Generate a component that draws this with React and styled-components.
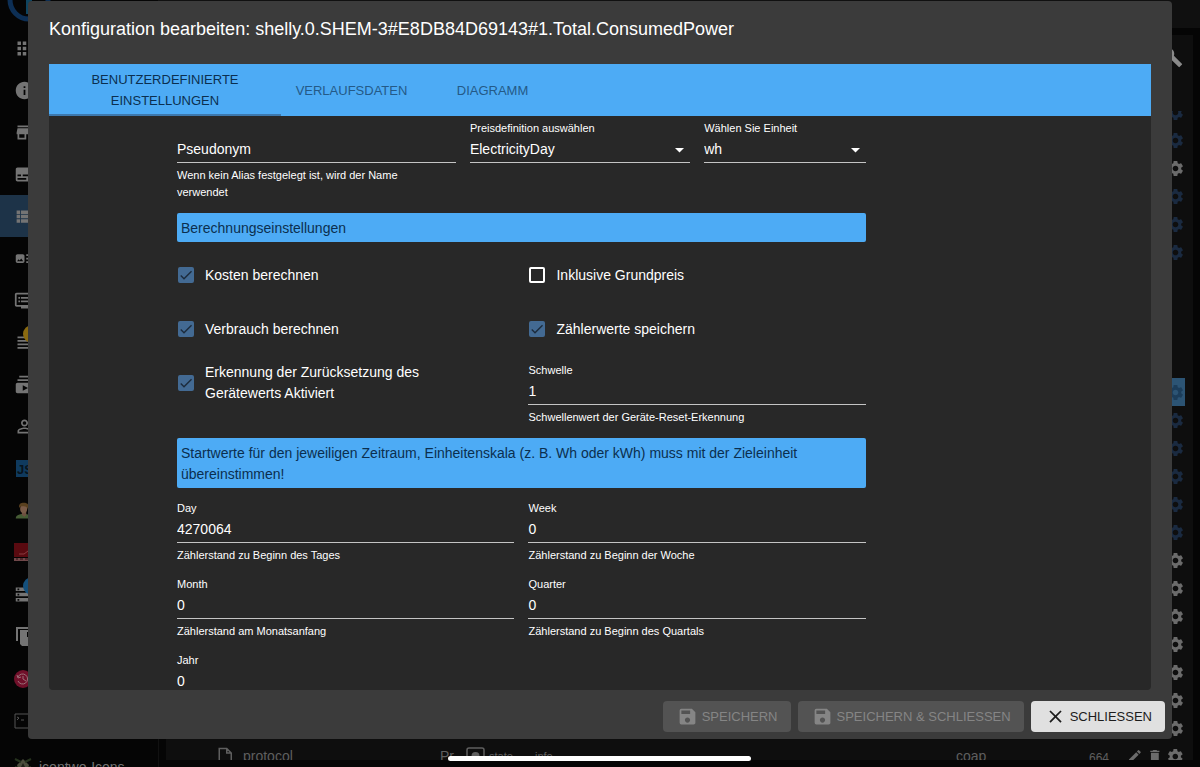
import React, { useState } from 'react';
import styled, { createGlobalStyle, css, ThemeProvider } from 'styled-components';
import {
  MdApps,
  MdInfo,
  MdStore,
  MdSubtitles,
  MdViewList,
  MdArtTrack,
  MdDvr,
  MdViewHeadline,
  MdSubscriptions,
  MdPersonOutline,
  MdStorage,
  MdSettings,
  MdBuild,
  MdEdit,
  MdDelete,
  MdSave,
  MdClose,
  MdCheck,
} from 'react-icons/md';

const theme = {
  colors: {
    page: '#050505',
    appBar: '#101010',
    panel: '#0e0e0e',
    dialog: '#3b3b3b',
    content: '#282828',
    primary: '#4dabf5',
    primaryText: '#0b2f4f',
    secondary: '#436a93',
    text: '#ffffff',
    line: '#c4c4c4',
    dimmed: '#5f5f5f',
    dimmedBlue: '#1a2a40',
    selected: '#2c5474',
  },
};

const GlobalStyle = createGlobalStyle`
  *, *::before, *::after {
    box-sizing: border-box;
  }

  body {
    margin: 0;
    background: #050505;
    color: #fff;
    font-family: "Liberation Sans", Arial, Helvetica, sans-serif;
    font-size: 14px;
    overflow: hidden;
  }

  button, input, select {
    font: inherit;
  }
`;

/* ---------- admin page behind the dialog ---------- */

const Page = styled.div`
  display: flex;
  height: 100vh;
  overflow: hidden;
  background: ${props => props.theme.colors.page};
`;

const Sidebar = styled.nav`
  width: 159px;
  flex-shrink: 0;
  border-right: 1px solid #111;
`;

const LogoBar = styled.div`
  height: 27px;
  padding-left: 7px;
  display: flex;
  align-items: flex-end;

  svg {
    flex-shrink: 0;
    margin-bottom: 5px;
  }
`;

const MenuLink = styled.a`
  display: flex;
  align-items: center;
  gap: 4px;
  height: 42px;
  padding-left: 14px;
  color: #747474;
  font-size: 14px;
  text-decoration: none;
  white-space: nowrap;
  background: ${props => (props.$active ? '#1d3348' : 'transparent')};

  &:last-child {
    margin-top: 5px;
  }

  svg {
    flex-shrink: 0;
  }
`;

const IconSlot = styled.span`
  position: relative;
  display: flex;
  width: 21px;
`;

const Badge = styled.span`
  position: absolute;
  top: -7px;
  left: 9px;
  width: 18px;
  height: 18px;
  border-radius: 50%;
  background: ${props => props.$color};
`;

const ScriptLogo = styled.span`
  width: 17px;
  height: 17px;
  margin-left: 2px;
  background: #0f3a5e;
  color: #08131c;
  font-size: 13px;
  font-weight: bold;
  line-height: 19px;
  text-align: right;
`;

const Main = styled.main`
  flex: 1;
  min-width: 0;
  display: flex;
  flex-direction: column;
`;

const AppBar = styled.header`
  height: 28px;
  flex-shrink: 0;
  background: ${props => props.theme.colors.appBar};
`;

const ObjectsPanel = styled.section`
  flex: 1;
  min-height: 0;
  display: flex;
  flex-direction: column;
  margin: 7px;
  padding-right: 8px;
  background: ${props => props.theme.colors.panel};
`;

const Toolbar = styled.div`
  display: flex;
  justify-content: flex-end;
  align-items: center;
  height: 44px;
  margin-bottom: 32px;
  padding-right: 2px;
  color: #8a8a8a;
`;

const ObjectList = styled.div`
  flex: 1;
  min-height: 0;
  overflow: hidden;

  > :first-child {
    margin-top: -13px;
  }
`;

const ObjectRow = styled.div`
  display: grid;
  grid-template-columns: 26px 197px 26px 69px 1fr 133px 38px 58px;
  align-items: center;
  height: 28px;
  padding-left: 51px;
  color: ${props => props.theme.colors.dimmed};
  background: ${props => (props.$selected ? props.theme.colors.selected : 'transparent')};
`;

const SmallCell = styled.span`
  display: flex;
  align-items: center;
  gap: 4px;
  font-size: 11px;
`;

const CountCell = styled.span`
  padding-top: 4px;
  font-size: 12px;
`;

const RowActions = styled.span`
  grid-column: 8;
  display: flex;
  justify-content: flex-end;
  align-items: center;
  gap: 4px;
  color: ${props => props.$color};
`;

/* ---------- dialog ---------- */

const Overlay = styled.div`
  position: fixed;
  inset: 0;
  display: flex;
  padding: 1px 28px 28px;
`;

const DialogBox = styled.div`
  flex: 1;
  min-width: 0;
  display: flex;
  flex-direction: column;
  border-radius: 4px;
  background: ${props => props.theme.colors.dialog};
`;

const DialogTitle = styled.h1`
  margin: 0;
  padding: 14px 21px 21px;
  font-size: 18px;
  font-weight: normal;
  line-height: 28px;
`;

const DialogBody = styled.div`
  flex: 1;
  min-height: 0;
  display: flex;
  flex-direction: column;
  margin: 0 21px;
  border-radius: 0 0 4px 4px;
  background: ${props => props.theme.colors.content};
  overflow: hidden;
`;

const Tabs = styled.div`
  display: flex;
  flex-shrink: 0;
  background: ${props => props.theme.colors.primary};
`;

const Tab = styled.button`
  min-width: 141px;
  max-width: 232px;
  padding: 5px 14px 3px;
  border: 0;
  border-bottom: 2px solid ${props => (props.$active ? '#3d78ad' : 'transparent')};
  background: none;
  color: ${props => (props.$active ? props.theme.colors.primaryText : '#245a87')};
  font-size: 13px;
  line-height: 21px;
  text-transform: uppercase;
  cursor: pointer;
`;

const Scroller = styled.div`
  flex: 1;
  min-height: 0;
  overflow-y: auto;
  scrollbar-width: none;
`;

const Form = styled.form`
  display: grid;
  grid-template-columns: repeat(12, 1fr);
  gap: 12px 14px;
  align-items: start;
  max-width: 689px;
  margin-left: 128px;
  padding: 4px 0 16px;
`;

const FieldBox = styled.div`
  grid-column: span ${props => props.$span};
  display: flex;
  flex-direction: column;
`;

const Label = styled.label`
  height: 16px;
  font-size: 11px;
  line-height: 16px;
`;

const controlStyle = css`
  width: 100%;
  height: 27px;
  padding: 0;
  border: 0;
  border-bottom: 1px solid ${props => props.theme.colors.line};
  border-radius: 0;
  background: transparent;
  color: ${props => props.theme.colors.text};
  font-size: 14px;
  outline: none;
  appearance: none;
`;

const Input = styled.input`
  ${controlStyle}

  &::placeholder {
    color: ${props => props.theme.colors.text};
    opacity: 1;
  }
`;

const Select = styled.select`
  ${controlStyle}

  option {
    background: ${props => props.theme.colors.content};
  }
`;

const SelectWrap = styled.div`
  position: relative;
  display: flex;

  svg {
    position: absolute;
    top: 12px;
    right: 6px;
    pointer-events: none;
  }
`;

const HelperText = styled.div`
  margin-top: 4px;
  padding-right: 42px;
  font-size: 11px;
  line-height: 17px;
`;

const Banner = styled.h2`
  grid-column: 1 / -1;
  margin: 0;
  padding: 5px 4px 3px;
  border-radius: 2px;
  background: ${props => props.theme.colors.primary};
  color: ${props => props.theme.colors.primaryText};
  font-size: 14px;
  font-weight: normal;
  line-height: 21px;
`;

const CheckLabel = styled.label`
  grid-column: span 6;
  display: flex;
  align-items: center;
  gap: 11px;
  min-height: 42px;
  padding: 0 70px 0 1px;
  line-height: 21px;
  cursor: pointer;
`;

const CheckWrap = styled.span`
  position: relative;
  display: flex;

  svg {
    position: absolute;
    inset: 0;
    color: #1c2b3b;
    pointer-events: none;
  }
`;

const CheckInput = styled.input`
  width: 16px;
  height: 16px;
  margin: 0;
  border: 2px solid #fff;
  border-radius: 2px;
  appearance: none;

  &:checked {
    border-color: ${props => props.theme.colors.secondary};
    background: ${props => props.theme.colors.secondary};
  }
`;

const Actions = styled.div`
  display: flex;
  justify-content: flex-end;
  gap: 7px;
  padding: 11px 7px 7px;
`;

const Button = styled.button`
  display: flex;
  align-items: center;
  gap: 4px;
  height: 31px;
  padding: 0 13px 0 14px;
  border: 0;
  border-radius: 4px;
  background: #e0e0e0;
  color: #1c1c1c;
  font-size: 13px;
  text-transform: uppercase;
  cursor: pointer;

  &:disabled {
    background: #535353;
    color: #858585;
    cursor: default;
  }
`;

const HomeIndicator = styled.div`
  position: fixed;
  bottom: 6px;
  left: 50%;
  width: 303px;
  height: 5px;
  margin-left: -152px;
  border-radius: 3px;
  background: #fff;
`;

/* ---------- icons without a library counterpart ---------- */

const Logo = () => (
  <svg width="44" height="44" viewBox="0 0 44 44">
    <circle cx="22" cy="22" r="19" fill="none" stroke="#0d2f55" strokeWidth="5" />
    <rect x="19" y="14" width="6" height="22" fill="#0f4560" />
  </svg>
);

const AvatarIcon = () => (
  <svg width="21" height="21" viewBox="0 0 24 24">
    <path d="M2 21c0-3 3-5 9-5s9 2 9 5z" fill="#465c35" />
    <path d="M9 13h5v4l-2 2-3-2z" fill="#6e5040" />
    <ellipse cx="11" cy="10" rx="4" ry="5" fill="#7a5b48" />
    <path d="M6 9C5 4 8 3 11 3c5 0 7 3 5 8-1-3-2-4-5-4s-4 0-5 2z" fill="#59401f" />
  </svg>
);

const RedIcon = () => (
  <svg width="21" height="21" viewBox="0 0 21 21">
    <path d="M0 1h21v14H0z" fill="#590a10" />
    <path d="M5 12h5l4-3h7" fill="none" stroke="#8b3b3f" />
    <path d="M0 16h21v3H0z" fill="#70484a" />
    <path d="M2 17h2m2 0h3m2 0h3" stroke="#2c0a0c" />
  </svg>
);

const CopyIcon = () => (
  <svg width="21" height="21" viewBox="0 0 21 21" fill="currentColor">
    <path d="M2 1h15v2H4v12H2z" />
    <path d="M6 4h15v16H8l-2-2zm7 2v5h3V6z" fillRule="evenodd" />
  </svg>
);

const HistoryIcon = () => (
  <svg width="21" height="21" viewBox="0 0 21 21" fill="none" stroke="#9a7078">
    <circle cx="9" cy="11" r="9" fill="#70102a" stroke="none" />
    <path d="M4 9a5 5 0 1 1 0 4M3 7l1 3 3-1M9 8v3l3 2" />
  </svg>
);

const TerminalIcon = () => (
  <svg width="21" height="21" viewBox="0 0 21 21" fill="none" stroke="#555">
    <path d="M1 4h19v14H1z" />
    <path d="M3 7l2 1-2 2m4 0h3" />
  </svg>
);

const PlantIcon = () => (
  <svg width="21" height="21" viewBox="0 0 21 21">
    <path d="M9 2l6 6-2 9H5L3 8z" fill="#4b4d3c" />
    <path d="M1 2l6 3M17 2l-6 3M1 10l3 1m13-1l-3 1" stroke="#26331e" strokeWidth="2" />
    <path d="M9 6l2 4-2 5-2-5z" fill="#1d1f16" />
  </svg>
);

const FileIcon = () => (
  <svg width="18" height="18" viewBox="0 0 24 24" fill="none" stroke="currentColor" strokeWidth="2">
    <path d="M3 23V2h10l6 6v15zM13 2v6h6" />
  </svg>
);

const StateIcon = () => (
  <svg width="19" height="18" viewBox="0 0 19 18">
    <rect x="1" y="1" width="17" height="16" rx="2" fill="none" stroke="currentColor" strokeWidth="1.5" />
    <circle cx="9.5" cy="9" r="4" fill="currentColor" />
  </svg>
);

const SelectArrow = () => (
  <svg width="9" height="5" viewBox="0 0 9 5">
    <path d="M0 0h9L4.5 4.5z" fill="#fff" />
  </svg>
);

/* ---------- data ---------- */

const menu = [
  { id: 'overview', icon: <MdApps size={21} /> },
  { id: 'info', icon: <MdInfo size={21} /> },
  { id: 'adapters', icon: <MdStore size={21} /> },
  { id: 'instances', icon: <MdSubtitles size={21} /> },
  { id: 'objects', icon: <MdViewList size={21} />, active: true },
  { id: 'enums', icon: <MdArtTrack size={21} /> },
  { id: 'devices', icon: <MdDvr size={21} /> },
  { id: 'logs', icon: <MdViewHeadline size={21} />, badge: '#8a6a10' },
  { id: 'scenes', icon: <MdSubscriptions size={21} /> },
  { id: 'users', icon: <MdPersonOutline size={21} /> },
  { id: 'scripts', icon: <ScriptLogo>JS</ScriptLogo> },
  { id: 'alias', icon: <AvatarIcon /> },
  { id: 'red', icon: <RedIcon /> },
  { id: 'hosts', icon: <MdStorage size={21} />, badge: '#14507c' },
  { id: 'files', icon: <CopyIcon /> },
  { id: 'backup', icon: <HistoryIcon /> },
  { id: 'terminal', icon: <TerminalIcon /> },
  { id: 'icons', icon: <PlantIcon />, label: 'icontwo-Icons' },
];

// state of the settings gear in every visible object row
const rows = [
  'on', 'on', 'off', 'on', 'on', 'on',
  'none', 'none', 'none', 'none',
  'selected',
  'on', 'on', 'on', 'on', 'on',
  'off', 'off', 'off', 'off', 'off', 'off', 'off',
];

const gearColors = {
  on: theme.colors.dimmedBlue,
  off: '#6b6b6b',
  selected: '#1c3d5a',
};

const tabs = ['Benutzerdefinierte Einstellungen', 'Verlaufsdaten', 'Diagramm'];

const startValues = [
  { id: 'day', label: 'Day', value: '4270064', helper: 'Zählerstand zu Beginn des Tages' },
  { id: 'week', label: 'Week', value: '0', helper: 'Zählerstand zu Beginn der Woche' },
  { id: 'month', label: 'Month', value: '0', helper: 'Zählerstand am Monatsanfang' },
  { id: 'quarter', label: 'Quarter', value: '0', helper: 'Zählerstand zu Beginn des Quartals' },
  { id: 'year', label: 'Jahr', value: '0', helper: 'Zählerstand am Jahresanfang' },
];

function TextField({ id, label, value, helper, span = 6 }) {
  return (
    <FieldBox $span={span}>
      <Label htmlFor={id}>{label}</Label>
      <Input id={id} type="text" defaultValue={value} />
      <HelperText>{helper}</HelperText>
    </FieldBox>
  );
}

function SelectField({ id, label, options, span }) {
  return (
    <FieldBox $span={span}>
      <Label htmlFor={id}>{label}</Label>
      <SelectWrap>
        <Select id={id}>
          {options.map(option => (
            <option key={option}>{option}</option>
          ))}
        </Select>
        <SelectArrow />
      </SelectWrap>
    </FieldBox>
  );
}

function CheckField({ label, initial = false }) {
  const [checked, setChecked] = useState(initial);

  return (
    <CheckLabel>
      <CheckWrap>
        <CheckInput
          type="checkbox"
          checked={checked}
          onChange={(e) => setChecked(e.target.checked)}
        />
        {checked && <MdCheck size={16} />}
      </CheckWrap>
      {label}
    </CheckLabel>
  );
}

function ObjectsPage() {
  return (
    <Page>
      <Sidebar>
        <LogoBar>
          <Logo />
        </LogoBar>
        {menu.map(item => (
          <MenuLink key={item.id} href={`#${item.id}`} $active={item.active}>
            <IconSlot>
              {item.icon}
              {item.badge && <Badge $color={item.badge} />}
            </IconSlot>
            {item.label}
          </MenuLink>
        ))}
      </Sidebar>
      <Main>
        <AppBar />
        <ObjectsPanel>
          <Toolbar>
            <MdBuild size={21} />
          </Toolbar>
          <ObjectList>
            {rows.map((state, index) => (
              <ObjectRow key={index} $selected={state === 'selected'}>
                {state !== 'none' && (
                  <RowActions $color={gearColors[state]}>
                    <MdSettings size={19} />
                  </RowActions>
                )}
              </ObjectRow>
            ))}
            <ObjectRow>
              <FileIcon />
              <span>protocol</span>
              <span>Pr</span>
              <SmallCell>
                <StateIcon />
                state
              </SmallCell>
              <SmallCell>info</SmallCell>
              <span>coap</span>
              <CountCell>664</CountCell>
              <RowActions $color="#6b6b6b">
                <MdEdit size={16} />
                <MdDelete size={16} />
                <MdSettings size={19} />
              </RowActions>
            </ObjectRow>
          </ObjectList>
        </ObjectsPanel>
      </Main>
    </Page>
  );
}

function ConfigDialog() {
  const [tab, setTab] = useState(0);

  return (
    <Overlay>
      <DialogBox role="dialog" aria-labelledby="dialog-title">
        <DialogTitle id="dialog-title">
          Konfiguration bearbeiten: shelly.0.SHEM-3#E8DB84D69143#1.Total.ConsumedPower
        </DialogTitle>
        <DialogBody>
          <Tabs role="tablist">
            {tabs.map((name, index) => (
              <Tab
                key={name}
                type="button"
                role="tab"
                aria-selected={tab === index}
                $active={tab === index}
                onClick={() => setTab(index)}
              >
                {name}
              </Tab>
            ))}
          </Tabs>
          <Scroller>
            <Form>
              <FieldBox $span={5}>
                <Label as="div" />
                <Input type="text" placeholder="Pseudonym" aria-label="Pseudonym" />
                <HelperText>Wenn kein Alias festgelegt ist, wird der Name verwendet</HelperText>
              </FieldBox>
              <SelectField
                id="price"
                label="Preisdefinition auswählen"
                options={['ElectricityDay']}
                span={4}
              />
              <SelectField id="unit" label="Wählen Sie Einheit" options={['wh']} span={3} />

              <Banner>Berechnungseinstellungen</Banner>
              <CheckField label="Kosten berechnen" initial />
              <CheckField label="Inklusive Grundpreis" />
              <CheckField label="Verbrauch berechnen" initial />
              <CheckField label="Zählerwerte speichern" initial />
              <CheckField label="Erkennung der Zurücksetzung des Gerätewerts Aktiviert" initial />
              <TextField
                id="threshold"
                label="Schwelle"
                value="1"
                helper="Schwellenwert der Geräte-Reset-Erkennung"
              />

              <Banner>
                Startwerte für den jeweiligen Zeitraum, Einheitenskala (z. B. Wh oder kWh) muss mit
                der Zieleinheit übereinstimmen!
              </Banner>
              {startValues.map(field => (
                <TextField key={field.id} {...field} />
              ))}
            </Form>
          </Scroller>
        </DialogBody>
        <Actions>
          <Button type="button" disabled>
            <MdSave size={21} />
            Speichern
          </Button>
          <Button type="button" disabled>
            <MdSave size={21} />
            Speichern &amp; Schliessen
          </Button>
          <Button type="button">
            <MdClose size={21} />
            Schliessen
          </Button>
        </Actions>
      </DialogBox>
    </Overlay>
  );
}

function App() {
  return (
    <ThemeProvider theme={theme}>
      <GlobalStyle />
      <ObjectsPage />
      <ConfigDialog />
      <HomeIndicator />
    </ThemeProvider>
  );
}

export default App;
